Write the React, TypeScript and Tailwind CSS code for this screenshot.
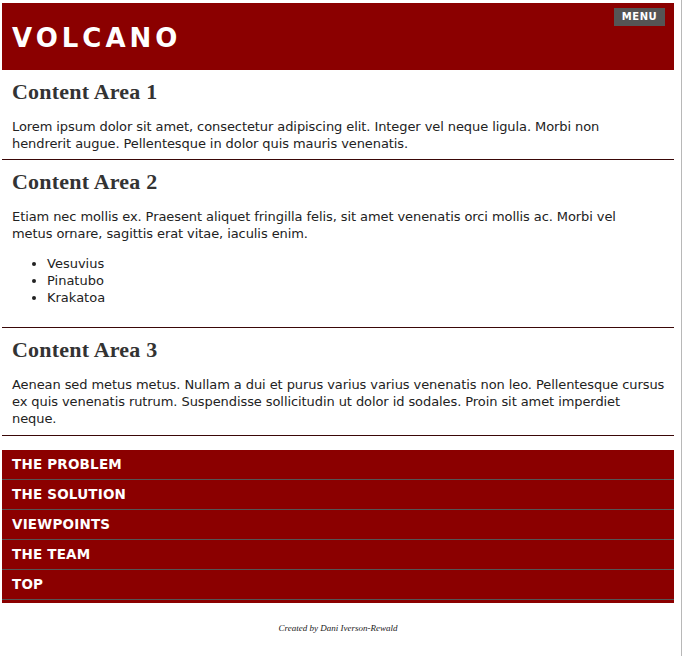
import React from "react";

type Section = {
  title: string;
  lines: string[];
  list?: string[];
};

// line breaks follow the reference rendering
const sections: Section[] = [
  {
    title: "Content Area 1",
    lines: [
      "Lorem ipsum dolor sit amet, consectetur adipiscing elit. Integer vel neque ligula. Morbi non",
      "hendrerit augue. Pellentesque in dolor quis mauris venenatis.",
    ],
  },
  {
    title: "Content Area 2",
    lines: [
      "Etiam nec mollis ex. Praesent aliquet fringilla felis, sit amet venenatis orci mollis ac. Morbi vel",
      "metus ornare, sagittis erat vitae, iaculis enim.",
    ],
    list: ["Vesuvius", "Pinatubo", "Krakatoa"],
  },
  {
    title: "Content Area 3",
    lines: [
      "Aenean sed metus metus. Nullam a dui et purus varius varius venenatis non leo. Pellentesque cursus",
      "ex quis venenatis rutrum. Suspendisse sollicitudin ut dolor id sodales. Proin sit amet imperdiet",
      "neque.",
    ],
  },
];

const navItems = ["The Problem", "The Solution", "Viewpoints", "The Team", "Top"];

export default function App() {
  return (
    <div className="relative w-[684px] h-[656px] bg-white overflow-hidden">
      {/* window edge on the right */}
      <div className="absolute right-[2px] top-0 h-full w-[1px] bg-[#b8b8b8]" />

      <div className="w-[672px] ml-[2px] pt-[3px]">
        {/* HEADER */}
        <header className="relative h-[67px] bg-[#8b0000]">
          <h1
            className="pl-[10px] pt-[18px] text-[26px] leading-[34px] font-bold tracking-[4px] text-white"
            style={{ fontFamily: '"DejaVu Sans", sans-serif' }}
          >
            VOLCANO
          </h1>
          <button
            className="absolute right-[9px] top-[5px] w-[51px] h-[18px] bg-[#555] text-white text-[10px] font-bold tracking-[0.5px] leading-[18px]"
            style={{ fontFamily: '"DejaVu Sans", sans-serif' }}
          >
            MENU
          </button>
        </header>

        {/* CONTENT */}
        {sections.map((s, i) => (
          <section
            key={s.title}
            className={`px-[10px] pt-[9px] border-b border-[#3a0808] text-[#222] ${i === 2 ? "pb-[8px]" : "pb-[7px]"}`}
            style={{ fontFamily: '"DejaVu Sans", sans-serif' }}
          >
            <h2
              className="text-[22px] leading-[26px] font-bold text-[#333] tracking-[0.2px]"
              style={{ fontFamily: '"Liberation Serif", serif' }}
            >
              {s.title}
            </h2>
            <p className="mt-[13px] text-[13px] leading-[17px] whitespace-nowrap tracking-[-0.08px]">
              {s.lines.map((l, j) => (
                <span key={j} className="block">
                  {l}
                </span>
              ))}
            </p>
            {s.list && (
              <ul className="list-disc pl-[35px] mt-[13px] mb-[14px] text-[13px] leading-[17px]">
                {s.list.map((li) => (
                  <li key={li}>{li}</li>
                ))}
              </ul>
            )}
          </section>
        ))}

        {/* NAV */}
        <nav className="mt-[14px] bg-[#8b0000] pb-[3px]">
          {navItems.map((n) => (
            <div
              key={n}
              className="h-[30px] px-[10px] border-b border-[#555] uppercase text-white font-bold text-[13.5px] leading-[28px] tracking-[0.2px]"
              style={{ fontFamily: '"DejaVu Sans", sans-serif' }}
            >
              {n}
            </div>
          ))}
        </nav>

        {/* FOOTER */}
        <footer
          className="mt-[19px] text-center italic text-[9px] text-[#222]"
          style={{ fontFamily: '"Liberation Serif", serif' }}
        >
          Created by Dani Iverson-Rewald
        </footer>
      </div>
    </div>
  );
}
